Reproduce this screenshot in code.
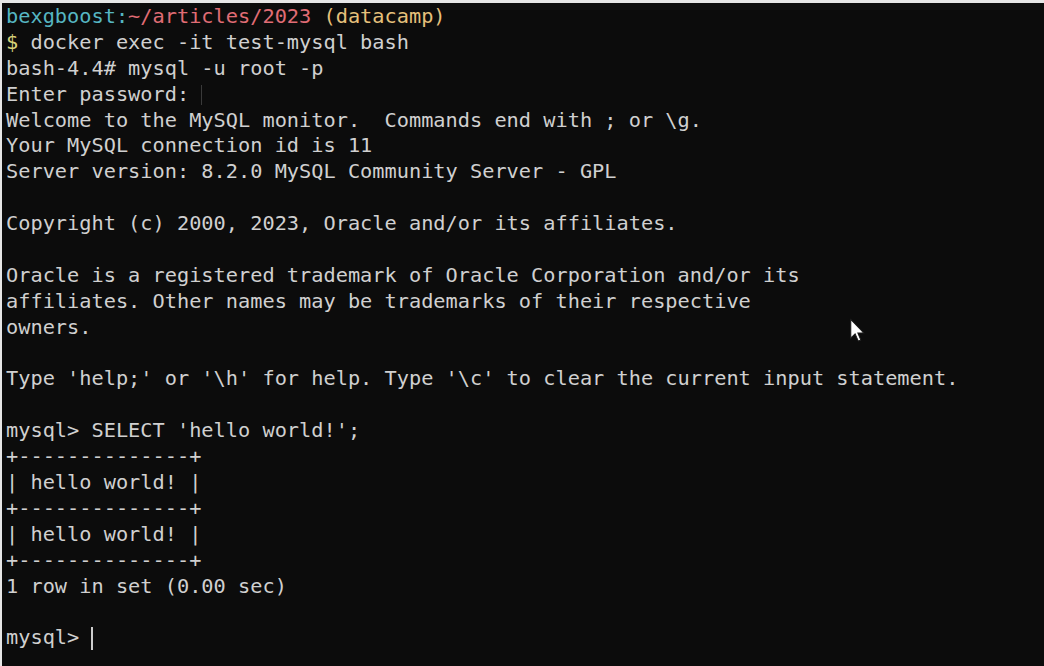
import React from "react";

const lines = [
  "Welcome to the MySQL monitor.  Commands end with ; or \\g.",
  "Your MySQL connection id is 11",
  "Server version: 8.2.0 MySQL Community Server - GPL",
  "",
  "Copyright (c) 2000, 2023, Oracle and/or its affiliates.",
  "",
  "Oracle is a registered trademark of Oracle Corporation and/or its",
  "affiliates. Other names may be trademarks of their respective",
  "owners.",
  "",
  "Type 'help;' or '\\h' for help. Type '\\c' to clear the current input statement.",
  "",
  "mysql> SELECT 'hello world!';",
  "+--------------+",
  "| hello world! |",
  "+--------------+",
  "| hello world! |",
  "+--------------+",
  "1 row in set (0.00 sec)",
  "",
];

const Line = ({ children }) => (
  <div className="h-[25.9px] leading-[25.9px] whitespace-pre">{children || " "}</div>
);

const Pointer = () => (
  <svg width="18" height="26" viewBox="0 0 12 18" className="absolute left-[849px] top-[318px]">
    <path d="M1 1 L1 14 L4 11 L6.2 16 L8 15.2 L5.9 10.4 L10 10.4 Z" fill="#ffffff" stroke="#1a1a1a" strokeWidth="0.7" />
  </svg>
);

export default function App() {
  return (
    <div className="relative w-[1044px] h-[666px] overflow-hidden bg-[#e6e6e6] pt-[3px] pl-[2px]">
      <div
        className="w-full h-full bg-[#0c0c0c] pl-[4px] pt-[1px] text-[20.3px] text-[#d0d0d0]"
        style={{ fontFamily: '"DejaVu Sans Mono", "Liberation Mono", monospace' }}
      >
        <Line>
          <span className="text-[#56b6c2]">bexgboost:</span>
          <span className="text-[#e06c75]">~/articles/2023</span>
          <span className="text-[#e5c07b]"> (datacamp)</span>
        </Line>
        <Line>
          <span className="text-[#d8d27a]">$</span> docker exec -it test-mysql bash
        </Line>
        <Line>bash-4.4# mysql -u root -p</Line>
        <Line>
          Enter password: <span className="inline-block w-[1px] h-[20px] align-middle bg-[#3a3a3a]" />
        </Line>
        {lines.map((l, i) => (
          <Line key={i}>{l}</Line>
        ))}
        <Line>
          mysql&gt; <span className="inline-block w-[2px] h-[23px] align-middle bg-[#cccccc]" />
        </Line>
      </div>
      <Pointer />
    </div>
  );
}
